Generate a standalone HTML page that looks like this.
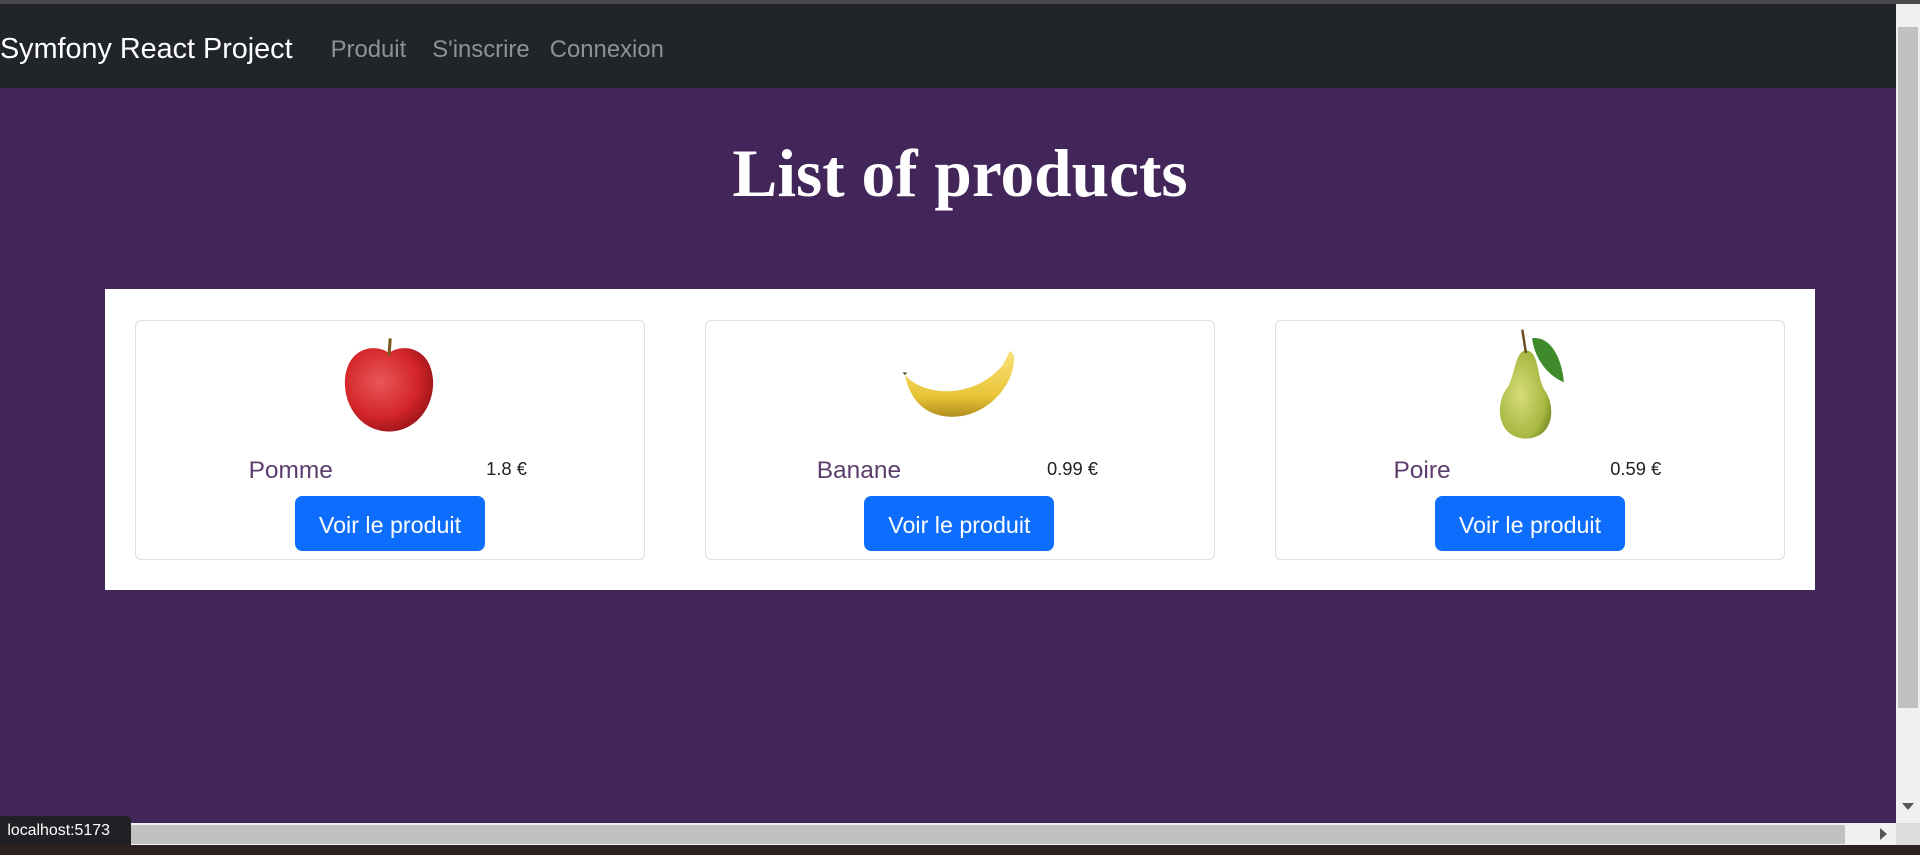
<!DOCTYPE html>
<html><head><meta charset="utf-8"><style>
html,body{margin:0;padding:0;overflow:hidden;background:#42265a}
#w{position:relative;width:1568px;height:698px;zoom:1.22449;font-family:"Liberation Sans",sans-serif;background:#42265a;overflow:hidden}
.a{position:absolute;white-space:nowrap}
.card{position:absolute;top:261px;width:415px;height:195px;border:1px solid #dcdfe3;border-radius:5px;background:#fff}
.btn{position:absolute;top:405px;width:155px;height:45px;background:#0d6efd;border-radius:6px;color:#fff;font-size:19px;line-height:48px;text-align:center}
.nm{position:absolute;top:373px;font-size:20px;color:#5d3d6c}
.pr{position:absolute;top:374px;font-size:15px;color:#222}
</style></head><body><div id="w">
<div class="a" style="left:0;top:0;width:1568px;height:3px;background:#4a4a4a"></div>
<div class="a" style="left:0;top:3px;width:1548px;height:69px;background:#212529"></div>
<div class="a" style="left:0;top:27px;font-size:23.5px;color:#fff">Symfony React Project</div>
<div class="a" style="left:270px;top:29px;font-size:19.5px;color:#8f9194">Produit</div>
<div class="a" style="left:353px;top:29px;font-size:19.5px;color:#8f9194">S'inscrire</div>
<div class="a" style="left:449px;top:29px;font-size:19.5px;color:#8f9194">Connexion</div>
<div class="a" style="left:0;top:110px;width:1568px;text-align:center;font-family:'Liberation Serif',serif;font-weight:bold;font-size:55px;color:#fff">List of products</div>
<div class="a" style="left:86px;top:236px;width:1396px;height:246px;background:#fff"></div>
<div class="card" style="left:110px"></div>
<div class="card" style="left:576px"></div>
<div class="card" style="left:1041px"></div>
<svg class="a" style="left:278px;top:274px" width="80" height="82" viewBox="0 0 80 82"><defs><radialGradient id="ap" cx="0.4" cy="0.4" r="0.7"><stop offset="0" stop-color="#e8575a"/><stop offset="0.6" stop-color="#d4262a"/><stop offset="1" stop-color="#8e1014"/></radialGradient></defs><path d="M40 14 C30 6 6 8 4 36 C3 58 18 78 40 78 C62 78 77 58 76 36 C74 8 50 6 40 14Z" fill="url(#ap)"/><path d="M40 16 L41 2" stroke="#7a5a1a" stroke-width="2.5"/></svg>
<svg class="a" style="left:735px;top:284px" width="95" height="60" viewBox="0 0 95 60"><defs><linearGradient id="bn" x1="0" y1="0" x2="0" y2="1"><stop offset="0" stop-color="#fbe27a"/><stop offset="0.7" stop-color="#e8c437"/><stop offset="1" stop-color="#b08d1c"/></linearGradient></defs><path d="M4 22 C20 40 60 42 84 14 L90 2 L93 6 C95 30 70 58 40 56 C20 55 8 42 4 22Z" fill="url(#bn)"/><path d="M4 22 L2 20 L6 20Z" fill="#4a3a10"/></svg>
<svg class="a" style="left:1215px;top:266px" width="70" height="94" viewBox="0 0 70 94"><defs><radialGradient id="pr" cx="0.4" cy="0.5" r="0.7"><stop offset="0" stop-color="#d6dc7a"/><stop offset="0.7" stop-color="#a8b840"/><stop offset="1" stop-color="#6f8220"/></radialGradient></defs><path d="M30 20 C22 22 22 40 16 50 C6 62 6 90 30 92 C54 92 56 66 46 52 C40 42 42 22 32 20Z" fill="url(#pr)"/><path d="M31 22 L28 3" stroke="#6b4a20" stroke-width="2"/><path d="M36 10 C50 8 60 24 62 46 C48 40 38 26 36 10Z" fill="#3f8a2a"/></svg>
<div class="nm" style="left:203px">Pomme</div><div class="pr" style="left:397px">1.8 €</div>
<div class="nm" style="left:667px">Banane</div><div class="pr" style="left:855px">0.99 €</div>
<div class="nm" style="left:1138px">Poire</div><div class="pr" style="left:1315px">0.59 €</div>
<div class="btn" style="left:241px">Voir le produit</div>
<div class="btn" style="left:706px">Voir le produit</div>
<div class="btn" style="left:1172px">Voir le produit</div>
<div class="a" style="left:1548px;top:3px;width:20px;height:669px;background:#f0f0f0"></div>
<div class="a" style="left:1550px;top:22px;width:16px;height:556px;background:#c1c1c1"></div>
<div class="a" style="left:1553px;top:656px;width:0;height:0;border-left:5px solid transparent;border-right:5px solid transparent;border-top:6px solid #555"></div>
<div class="a" style="left:0;top:672px;width:1548px;height:18px;background:#f0f0f0"></div>
<div class="a" style="left:0;top:674px;width:1507px;height:15px;background:#c1c1c1"></div>
<div class="a" style="left:1535px;top:676px;width:0;height:0;border-top:5px solid transparent;border-bottom:5px solid transparent;border-left:6px solid #555"></div>
<div class="a" style="left:1548px;top:672px;width:20px;height:18px;background:#dcdcdc"></div>
<div class="a" style="left:0;top:690px;width:1568px;height:8px;background:#2e2020"></div>
<div class="a" style="left:0;top:666px;width:107px;height:24px;background:#202124;border-radius:0 4px 0 0;color:#fff;font-size:13px;line-height:24px;text-indent:6px">localhost:5173</div>
</div></body></html>
